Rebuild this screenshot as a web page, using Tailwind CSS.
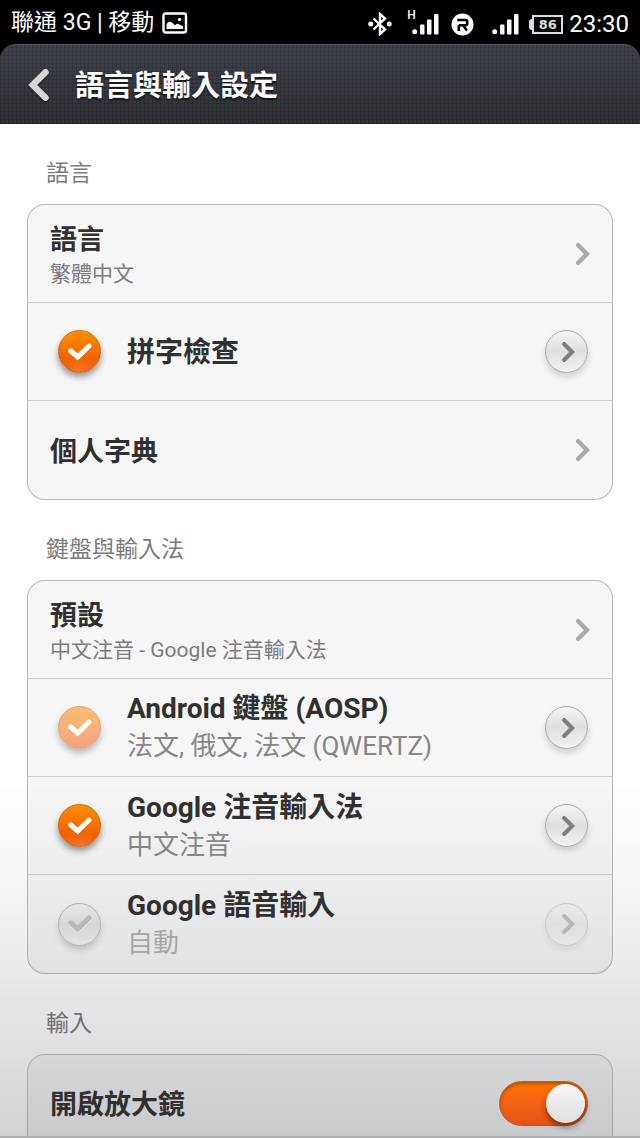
<!DOCTYPE html>
<html lang="zh-Hant">
<head>
<meta charset="utf-8">
<meta name="viewport" content="width=device-width, initial-scale=1">
<title>語言與輸入設定</title>
<script src="https://cdn.jsdelivr.net/npm/@tailwindcss/browser@4"></script>
</head>
<body class="bg-black font-['Roboto','Noto_Sans_CJK_TC',sans-serif] text-[#303030]">
<svg class="hidden" aria-hidden="true">
  <symbol id="chevron" viewBox="0 0 14 22"><path d="M2.2 2.2 11 11 2.2 19.8" fill="none" stroke="currentColor" stroke-width="4.4" stroke-linecap="round" stroke-linejoin="miter"/></symbol>
  <symbol id="tick" viewBox="0 0 24 18"><path d="M2.800 8 9.700 14 21 3" fill="none" stroke="currentColor" stroke-width="5" stroke-linecap="round" stroke-linejoin="miter"/></symbol>
  <symbol id="signal" viewBox="0 0 27 22"><circle cx="2.7" cy="18.8" r="2.5"/><rect x="8" y="11.5" width="4.500" height="10" rx="1"/><rect x="15" y="6.5" width="4.500" height="15" rx="1"/><rect x="22" y="1" width="4.500" height="20.5" rx="1"/></symbol>
</svg>
<div class="flex h-screen flex-col overflow-hidden">
  <div class="flex h-11 shrink-0 items-center justify-between px-[11px] pt-0.5 text-white">
    <div class="flex items-center gap-2">
      <span class="text-[23px] leading-7">聯通 3G | 移動</span>
      <svg class="h-[22px] w-[26px]" viewBox="0 0 26 22" aria-hidden="true"><rect x="1.5" y="1.5" width="22.5" height="19" rx="2" fill="none" stroke="#fff" stroke-width="2.4"/><path d="M4.500 17v-4.500c1.500-3 4-3.500 6-1.500l2.500 2.300c1.500-1.800 3-2 4-1l4 2V17z" fill="#fff"/><circle cx="17.500" cy="7.500" r="1.700" fill="#fff"/></svg>
    </div>
    <div class="flex items-center pt-0.5">
      <svg class="h-6 w-6" viewBox="0 0 24 24" aria-hidden="true"><path d="M5.500 6.500 17 17.500 12 22V2l5 4.500L5.500 17.500" fill="none" stroke="#fff" stroke-width="2.400"/><circle cx="2.700" cy="12" r="2.500" fill="#fff"/><circle cx="21.300" cy="12" r="2.500" fill="#fff"/></svg>
      <div class="ml-[15px] flex items-start">
        <span class="-mt-1 w-[5px] text-[12px] leading-3 font-medium">H</span>
        <svg class="h-[22px] w-[27px] fill-white" aria-hidden="true"><use href="#signal"/></svg>
      </div>
      <svg class="ml-3 size-[23px]" viewBox="0 0 23 23" aria-hidden="true"><circle cx="11.500" cy="11.500" r="11" fill="#fff"/><path d="M7.800 18V12.300M6.300 7h8.200q1.700 0 1.700 1.700v1.900q0 1.700-1.700 1.700H7.800M12 12.500 16 17.500" fill="none" stroke="#000" stroke-width="2.600"/></svg>
      <svg class="ml-[18px] h-[22px] w-[27px] fill-white" aria-hidden="true"><use href="#signal"/></svg>
      <div class="ml-[10px] flex items-center">
        <span class="h-[11px] w-[3px] rounded-l bg-[#ddd]"></span>
        <span class="flex h-[19px] w-[31px] items-center justify-center border-2 border-[#ddd] font-['DejaVu_Sans',sans-serif] text-[13px] leading-none font-bold text-[#ddd]">86</span>
      </div>
      <span class="ml-[6px] text-[24px] leading-7">23:30</span>
    </div>
  </div>

  <header class="flex h-20 shrink-0 items-center rounded-t-2xl border-t border-[#55565a] bg-[repeating-linear-gradient(0deg,rgb(0_0_0/0.14)_0_1px,transparent_1px_4px),repeating-linear-gradient(90deg,rgb(0_0_0/0.14)_0_1px,transparent_1px_4px),linear-gradient(#3f434d,#303135)] pl-7">
    <button type="button" aria-label="返回" class="text-[#d6d6d6] drop-shadow-[0_1px_1px_rgb(0_0_0/0.6)]">
      <svg class="block h-8 w-[21px] rotate-180" aria-hidden="true"><use href="#chevron"/></svg>
    </button>
    <h1 class="ml-[26px] pt-[3px] text-[29px] leading-9 font-bold text-white text-shadow-[0_2px_2px_rgb(0_0_0/0.6)]">語言與輸入設定</h1>
  </header>

  <main class="flex-1 overflow-hidden border-b-2 border-[#adaeaf] bg-[linear-gradient(#fff_65%,#f5f6f6_75%,#e7e8e9_85%,#d2d3d5)]">
    <section>
      <h2 class="h-20 pt-[34px] pl-[46px] text-[23px] leading-8 text-[#7c7c7c]">語言</h2>
      <div class="mx-[27px] divide-y divide-black/15 rounded-[18px] border border-black/25 bg-black/[0.035]">
        <a href="#language" class="flex h-[98px] items-center justify-between pr-[22px] pl-[22px]">
          <span class="flex flex-col pt-1">
            <span class="text-[27px] leading-9 font-bold">語言</span>
            <span class="text-[21px] leading-8 text-[#7c7c7c]">繁體中文</span>
          </span>
          <svg class="h-[22px] w-[14px] text-[#aaa]" aria-hidden="true"><use href="#chevron"/></svg>
        </a>
        <div class="flex h-[98px] items-center pr-6 pl-[30px]">
          <label class="flex flex-1 items-center gap-[26px]">
            <span class="relative flex size-[43px] items-center justify-center">
              <input type="checkbox" checked class="absolute inset-0 appearance-none rounded-full border border-[#d0641a] bg-[radial-gradient(60%_35%_at_50%_100%,rgb(255_150_80/0.6),transparent),linear-gradient(#ff8f00,#e94e00)] shadow-[0_4px_6px_rgb(0_0_0/0.4)]">
              <svg class="relative h-[18px] w-6 text-white" aria-hidden="true"><use href="#tick"/></svg>
            </span>
            <span class="pt-[2px] text-[28px] leading-9 font-bold">拼字檢查</span>
          </label>
          <button type="button" aria-label="拼字檢查設定" class="flex size-[43px] items-center justify-center rounded-full border border-[#a9a9a9] bg-linear-to-b from-[#f6f6f6] via-[#dedede] to-[#f2f2f2] pl-[3px] text-[#7d7d7d] shadow-[0_4px_6px_rgb(0_0_0/0.15)]"><svg class="h-5 w-[13px]" aria-hidden="true"><use href="#chevron"/></svg></button>
        </div>
        <a href="#dictionary" class="flex h-[98px] items-center justify-between pr-[22px] pl-[22px]">
          <span class="pt-[3px] text-[27px] leading-9 font-bold">個人字典</span>
          <svg class="h-[22px] w-[14px] text-[#aaa]" aria-hidden="true"><use href="#chevron"/></svg>
        </a>
      </div>
    </section>

    <section>
      <h2 class="h-20 pt-[34px] pl-[46px] text-[23px] leading-8 text-[#7c7c7c]">鍵盤與輸入法</h2>
      <div class="mx-[27px] divide-y divide-black/15 rounded-[18px] border border-black/25 bg-black/[0.035]">
        <a href="#default" class="flex h-[98px] items-center justify-between pr-[22px] pl-[22px]">
          <span class="flex flex-col pt-1">
            <span class="text-[27px] leading-9 font-bold">預設</span>
            <span class="text-[21px] leading-8 text-[#7c7c7c]">中文注音 - Google 注音輸入法</span>
          </span>
          <svg class="h-[22px] w-[14px] text-[#aaa]" aria-hidden="true"><use href="#chevron"/></svg>
        </a>
        <div class="flex h-[98px] items-center pr-6 pl-[30px]">
          <label class="flex flex-1 items-center gap-[26px]">
            <span class="relative flex size-[43px] items-center justify-center">
              <input type="checkbox" checked disabled class="absolute inset-0 appearance-none rounded-full border border-[#dda37c] bg-linear-to-b from-[#f8bd70] to-[#f2a482] shadow-[0_4px_6px_rgb(0_0_0/0.25)]">
              <svg class="relative h-[18px] w-6 text-white" aria-hidden="true"><use href="#tick"/></svg>
            </span>
            <span class="flex flex-col">
              <span class="text-[28px] leading-9 font-bold">Android 鍵盤 (AOSP)</span>
              <span class="text-[26px] leading-[38px] text-[#868686]">法文, 俄文, 法文 (QWERTZ)</span>
            </span>
          </label>
          <button type="button" aria-label="Android 鍵盤設定" class="flex size-[43px] items-center justify-center rounded-full border border-[#a9a9a9] bg-linear-to-b from-[#f6f6f6] via-[#dedede] to-[#f2f2f2] pl-[3px] text-[#7d7d7d] shadow-[0_4px_6px_rgb(0_0_0/0.15)]"><svg class="h-5 w-[13px]" aria-hidden="true"><use href="#chevron"/></svg></button>
        </div>
        <div class="flex h-[98px] items-center pr-6 pl-[30px]">
          <label class="flex flex-1 items-center gap-[26px]">
            <span class="relative flex size-[43px] items-center justify-center">
              <input type="checkbox" checked class="absolute inset-0 appearance-none rounded-full border border-[#d0641a] bg-[radial-gradient(60%_35%_at_50%_100%,rgb(255_150_80/0.6),transparent),linear-gradient(#ff8f00,#e94e00)] shadow-[0_4px_6px_rgb(0_0_0/0.4)]">
              <svg class="relative h-[18px] w-6 text-white" aria-hidden="true"><use href="#tick"/></svg>
            </span>
            <span class="flex flex-col pt-[2px]">
              <span class="text-[28px] leading-9 font-bold">Google 注音輸入法</span>
              <span class="text-[26px] leading-[38px] text-[#868686]">中文注音</span>
            </span>
          </label>
          <button type="button" aria-label="Google 注音輸入法設定" class="flex size-[43px] items-center justify-center rounded-full border border-[#a9a9a9] bg-linear-to-b from-[#f6f6f6] via-[#dedede] to-[#f2f2f2] pl-[3px] text-[#7d7d7d] shadow-[0_4px_6px_rgb(0_0_0/0.15)]"><svg class="h-5 w-[13px]" aria-hidden="true"><use href="#chevron"/></svg></button>
        </div>
        <div class="flex h-[98px] items-center pr-6 pl-[30px]">
          <label class="flex flex-1 items-center gap-[26px]">
            <span class="relative flex size-[43px] items-center justify-center">
              <input type="checkbox" class="absolute inset-0 appearance-none rounded-full border border-[#afb0b0] bg-linear-to-b from-[#e8e8e8] via-[#d5d6d6] to-[#e2e2e3] shadow-[0_4px_6px_rgb(0_0_0/0.15)]">
              <svg class="relative h-[18px] w-6 text-[#b9b9b9] drop-shadow-[0_1px_0_#eee]" aria-hidden="true"><use href="#tick"/></svg>
            </span>
            <span class="flex flex-col pt-[2px]">
              <span class="text-[28px] leading-9 font-bold">Google 語音輸入</span>
              <span class="text-[26px] leading-[38px] text-[#a6a6a7]">自動</span>
            </span>
          </label>
          <button type="button" disabled aria-label="Google 語音輸入設定" class="flex size-[43px] items-center justify-center rounded-full border border-[#c6c7c7] bg-linear-to-b from-[#e9e9e9] via-[#dfdfe0] to-[#e5e5e6] pl-[3px] text-[#b7b7b8] shadow-[0_4px_6px_rgb(0_0_0/0.06)]"><svg class="h-5 w-[13px]" aria-hidden="true"><use href="#chevron"/></svg></button>
        </div>
      </div>
    </section>

    <section>
      <h2 class="h-20 pt-[34px] pl-[46px] text-[23px] leading-8 text-[#707071]">輸入</h2>
      <div class="mx-[27px] rounded-[18px] border border-black/20 bg-black/[0.035]">
        <label class="flex h-24 items-center justify-between pr-6 pl-[22px]">
          <span class="pt-[3px] text-[27px] leading-9 font-bold">開啟放大鏡</span>
          <span class="relative h-[45px] w-[89px]">
            <input type="checkbox" role="switch" checked class="absolute inset-0 appearance-none rounded-full border border-[#a9623a] bg-linear-to-b from-[#ff7200] to-[#e8521c] shadow-[inset_0_2px_3px_rgb(0_0_0/0.3)]">
            <span class="absolute top-[3px] right-[3px] size-[39px] rounded-full bg-linear-to-b from-[#f8f8f8] to-[#dedede] shadow-[0_4px_6px_rgb(0_0_0/0.45)]"></span>
          </span>
        </label>
      </div>
    </section>
  </main>
</div>
</body>
</html>
